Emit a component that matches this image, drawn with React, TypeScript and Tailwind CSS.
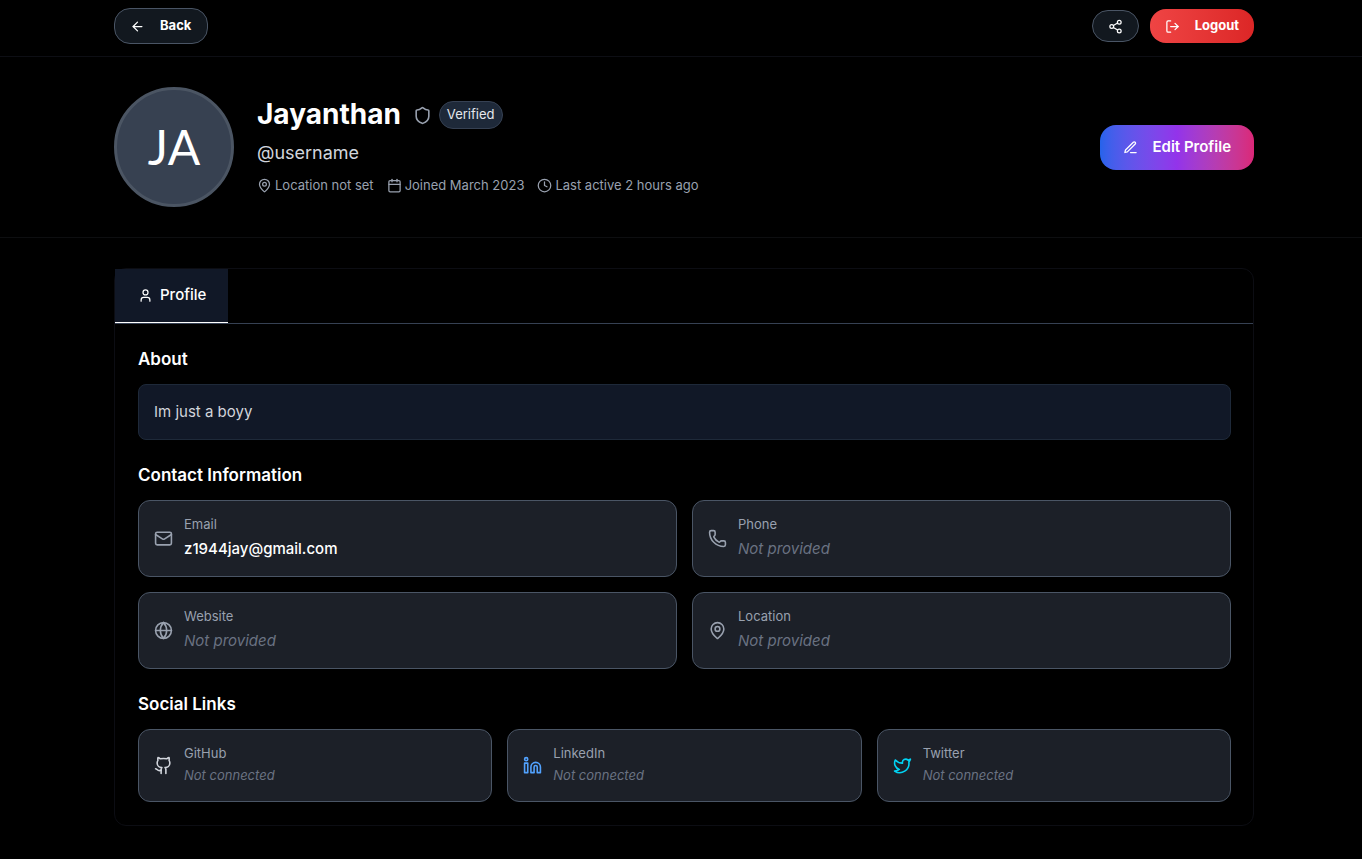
import type { ReactNode } from "react";
import {
  ArrowLeft,
  Calendar,
  Clock,
  Github,
  Globe,
  Linkedin,
  LogOut,
  Mail,
  MapPin,
  Phone,
  Share2,
  Shield,
  Twitter,
  User,
} from "lucide-react";
import { FiEdit3 } from "react-icons/fi";

function Meta({ icon, children }: { icon: ReactNode; children: ReactNode }) {
  return (
    <span className="flex items-center gap-[3px]">
      {icon}
      <span>{children}</span>
    </span>
  );
}

function InfoCard({
  icon,
  label,
  value,
  placeholder,
  small,
}: {
  icon: ReactNode;
  label: string;
  value?: string;
  placeholder?: string;
  small?: boolean;
}) {
  return (
    <div className="flex items-center gap-[11px] rounded-xl border border-gray-600 bg-[#1c2028] p-[15px]">
      {icon}
      <div className="flex min-w-0 flex-col gap-[5px] pb-px">
        <p className="text-[13px] leading-4 text-gray-400">{label}</p>
        {value ? (
          <p className="text-[15px] leading-[23px] font-medium text-white">{value}</p>
        ) : (
          <p
            className={
              small
                ? "text-[13px] leading-[19px] text-gray-500 italic"
                : "text-[15px] leading-[23px] text-gray-500 italic"
            }
          >
            {placeholder}
          </p>
        )}
      </div>
    </div>
  );
}

function Section({ title, children }: { title: string; children: ReactNode }) {
  return (
    <section className="flex flex-col gap-3">
      <h2 className="text-[17px] leading-[25px] font-semibold text-white">{title}</h2>
      {children}
    </section>
  );
}

const container = "mx-auto w-full max-w-[1140px]";

export default function App() {
  return (
    <div className="min-h-screen bg-black font-['Inter',sans-serif] text-white">
      <header className="border-b border-[#0d0e14] py-2 pl-[6px]">
        <div className={`${container} flex h-10 items-center justify-between pb-1`}>
          <button className="flex h-9 items-center gap-[15px] rounded-2xl border border-gray-600 bg-[#12181f] pr-4 pl-[15px] text-[13px] font-bold">
            <ArrowLeft className="size-[15px]" />
            Back
          </button>
          <div className="flex items-center gap-[11px]">
            <button
              aria-label="Share"
              className="flex h-8 w-[47px] items-center justify-center rounded-2xl border border-gray-600 bg-[#12181f]"
            >
              <Share2 className="size-[15px]" />
            </button>
            <button className="flex h-[34px] items-center gap-[15px] rounded-2xl bg-linear-to-r from-[#ef4444] to-[#dc2626] px-[15px] text-[13px] font-bold">
              <LogOut className="size-[15px]" />
              Logout
            </button>
          </div>
        </div>
      </header>

      <div className="border-b border-[#0d0e10] py-[30px] pl-[6px]">
        <div className={`${container} flex items-center justify-between`}>
          <div className="flex items-center gap-[23px]">
            <div className="flex size-[120px] items-center justify-center rounded-full border-3 border-[#4b5563] bg-[#374151] font-['Lato',sans-serif] text-[48px] leading-none text-white">
              JA
            </div>
            <div className="flex flex-col">
              <div className="flex items-center gap-3">
                <h1 className="text-[28px] leading-[34px] font-bold">Jayanthan</h1>
                <div className="flex items-center gap-[7px] pt-[2px]">
                  <Shield className="size-[19px] text-gray-400" />
                  <span className="rounded-full border border-gray-700 bg-gray-800 px-[7px] pt-[3px] pb-[5px] text-[13px] leading-[18px] text-gray-200">
                    Verified
                  </span>
                </div>
              </div>
              <p className="mt-2 text-[18px] leading-[27px] text-gray-300">@username</p>
              <div className="mt-2 flex items-center gap-[13px] text-[13px] leading-[23px] text-gray-400">
                <Meta icon={<MapPin className="size-[15px]" />}>Location not set</Meta>
                <Meta icon={<Calendar className="size-[15px]" />}>Joined March 2023</Meta>
                <Meta icon={<Clock className="size-[15px]" />}>Last active 2 hours ago</Meta>
              </div>
            </div>
          </div>
          <button className="flex h-[45px] items-center gap-[14px] rounded-2xl bg-linear-to-r from-[#2563eb] via-[#9333ea] to-[#db2777] px-[23px] text-[15px] font-semibold">
            <FiEdit3 className="size-[15px]" />
            Edit Profile
          </button>
        </div>
      </div>

      <main className="py-[30px] pl-[6px]">
        <div className={`${container} rounded-xl border border-[#0c0d13]`}>
          <div className="flex border-b border-gray-700">
            <button className="flex h-[54px] items-center gap-[7px] border-b border-white bg-[#111827] pr-[22px] pl-[23px] text-[15px] font-medium">
              <User className="size-[15px]" />
              Profile
            </button>
          </div>
          <div className="flex flex-col gap-[23px] py-[23px] pr-[22px] pl-[23px]">
            <Section title="About">
              <div className="rounded-lg border border-gray-800 bg-[#111827] px-[15px] py-[15px]">
                <p className="text-[15px] leading-6 text-gray-300">Im just a boyy</p>
              </div>
            </Section>
            <Section title="Contact Information">
              <div className="grid grid-cols-2 gap-[15px]">
                <InfoCard
                  icon={<Mail className="size-[19px] shrink-0 text-gray-400" />}
                  label="Email"
                  value="z1944jay@gmail.com"
                />
                <InfoCard
                  icon={<Phone className="size-[19px] shrink-0 text-gray-400" />}
                  label="Phone"
                  placeholder="Not provided"
                />
                <InfoCard
                  icon={<Globe className="size-[19px] shrink-0 text-gray-400" />}
                  label="Website"
                  placeholder="Not provided"
                />
                <InfoCard
                  icon={<MapPin className="size-[19px] shrink-0 text-gray-400" />}
                  label="Location"
                  placeholder="Not provided"
                />
              </div>
            </Section>
            <Section title="Social Links">
              <div className="grid grid-cols-3 gap-[15px]">
                <InfoCard
                  small
                  icon={<Github className="size-[19px] shrink-0 text-gray-300" />}
                  label="GitHub"
                  placeholder="Not connected"
                />
                <InfoCard
                  small
                  icon={<Linkedin className="size-[19px] shrink-0 text-blue-400" />}
                  label="LinkedIn"
                  placeholder="Not connected"
                />
                <InfoCard
                  small
                  icon={<Twitter className="size-[19px] shrink-0 text-cyan-400" />}
                  label="Twitter"
                  placeholder="Not connected"
                />
              </div>
            </Section>
          </div>
        </div>
      </main>
    </div>
  );
}
